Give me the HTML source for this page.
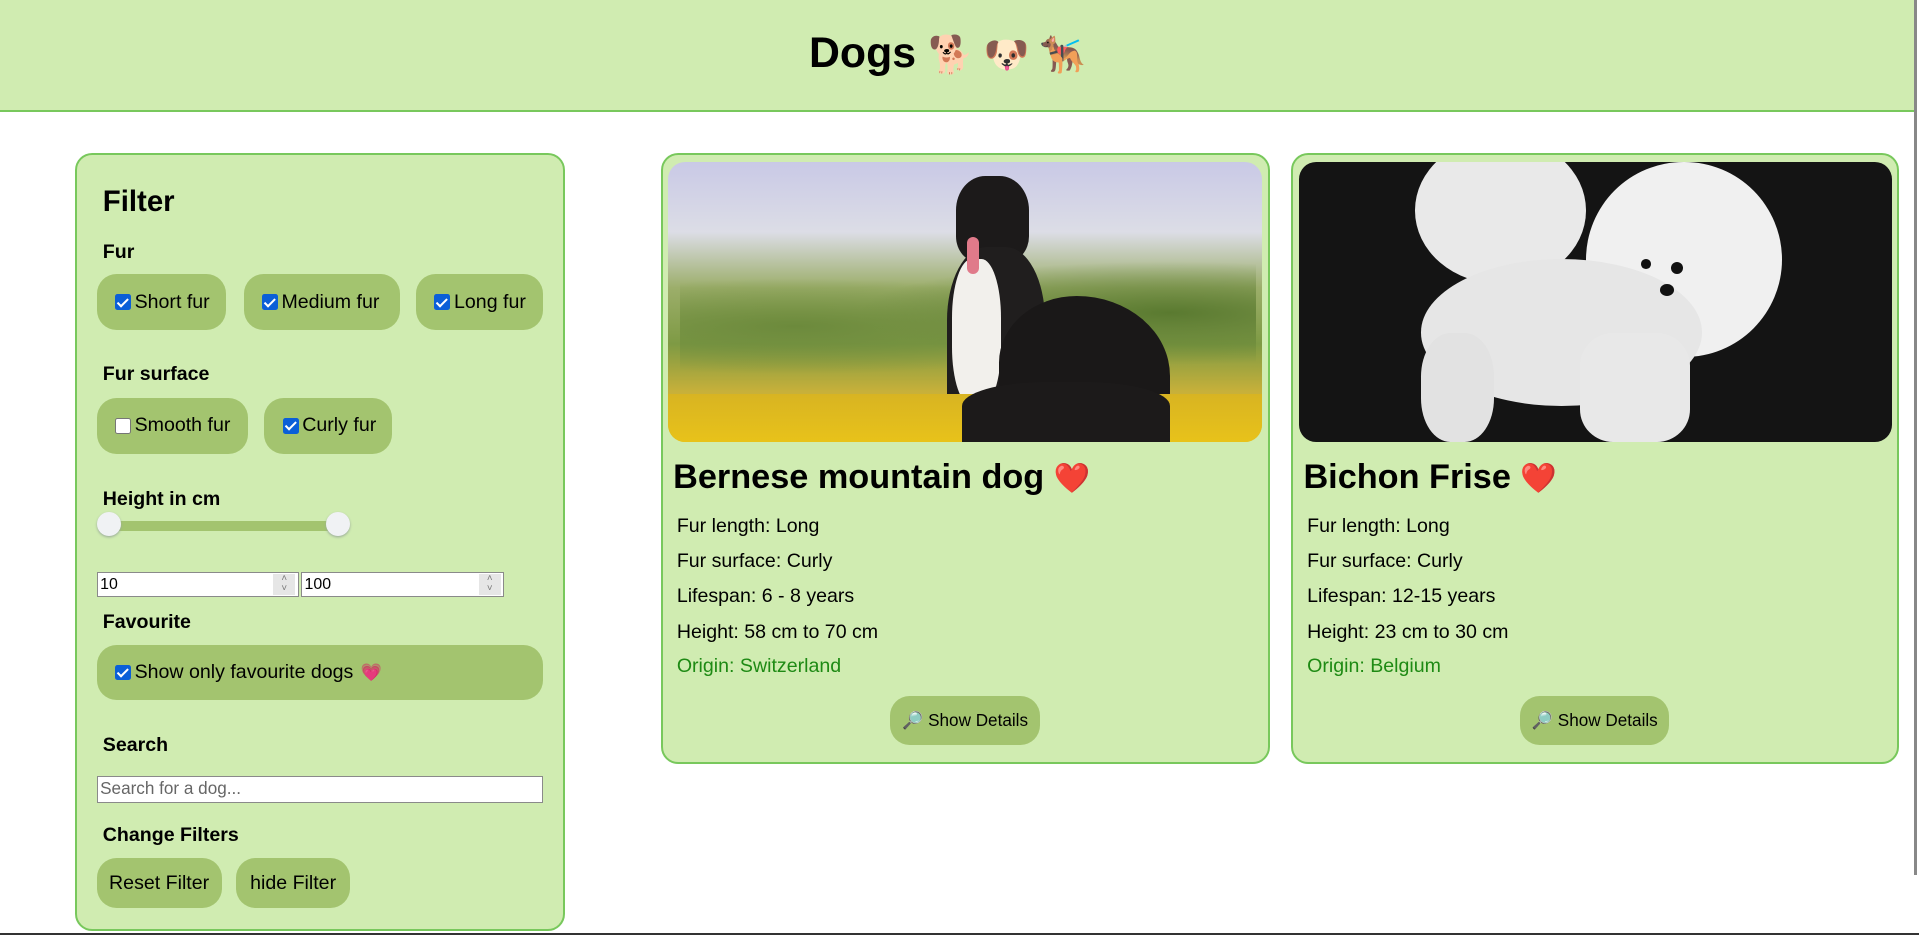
<!DOCTYPE html>
<html><head><meta charset="utf-8"><style>
html{zoom:1.2239}
body{margin:0;width:1568px;height:764px;position:relative;overflow:hidden;background:#fff;font-family:"Liberation Sans","Noto Sans CJK JP",sans-serif;color:#000}
.a{position:absolute}
.hdr{left:0;top:0;width:1564px;height:90px;background:#d0ecb1;border-bottom:2px solid #78c85c}
.panel{background:#d0ecb1;border:2px solid #78c85c;border-radius:14px;box-sizing:border-box}
.chip{background:#a3c46f;border-radius:16px;box-sizing:border-box;font-size:16px;display:flex;align-items:center;padding-left:15px}
.cb{width:13px;height:13px;border-radius:2px;background:#0a5fd8;margin-right:3px;position:relative;box-sizing:border-box}
.cb:after{content:"";position:absolute;left:4px;top:1px;width:3px;height:7px;border:solid #fff;border-width:0 2px 2px 0;transform:rotate(45deg)}
.cb.off{background:#fff;border:1px solid #767676}.cb.off:after{display:none}
.lbl{font-size:16px;font-weight:bold}
.inp{background:#fff;border:1px solid #8a8a8a;box-sizing:border-box;font-size:13px;padding-left:2px;line-height:19px}
.spin{position:absolute;right:2px;top:1px;width:18px;height:17px;background:#e6e6e6;font-size:8px;line-height:8px;text-align:center;color:#777}
.line{font-size:16px}
.btn{background:#a3c46f;border-radius:16px;font-size:14px;display:flex;align-items:center;justify-content:center}
</style></head><body>
<div class="a hdr"></div>
<div class="a" style="left:661px;top:24px;font-size:35px;font-weight:bold">Dogs <span style="font-size:30px">🐕 🐶 🐕‍🦺</span></div>
<div class="a" style="left:1564px;top:0;width:2px;height:715px;background:#888"></div>
<div class="a" style="left:0;top:762px;width:1568px;height:2px;background:#333"></div>

<div class="a panel" style="left:61px;top:125px;width:401px;height:636px"></div>
<div class="a" style="left:84px;top:151px;font-size:24px;font-weight:bold">Filter</div>
<div class="a lbl" style="left:84px;top:197px">Fur</div>
<div class="a chip" style="left:79px;top:224px;width:106px;height:46px"><span class="cb"></span>Short fur</div>
<div class="a chip" style="left:199px;top:224px;width:128px;height:46px"><span class="cb"></span>Medium fur</div>
<div class="a chip" style="left:340px;top:224px;width:104px;height:46px"><span class="cb"></span>Long fur</div>
<div class="a lbl" style="left:84px;top:297px">Fur surface</div>
<div class="a chip" style="left:79px;top:325px;width:124px;height:46px"><span class="cb off"></span>Smooth fur</div>
<div class="a chip" style="left:216px;top:325px;width:104px;height:46px"><span class="cb"></span>Curly fur</div>
<div class="a lbl" style="left:84px;top:399px">Height in cm</div>
<div class="a" style="left:88px;top:426px;width:190px;height:8px;background:#a3c46f;border-radius:4px"></div>
<div class="a" style="left:79px;top:418px;width:20px;height:20px;border-radius:50%;background:#f0f2f4;box-shadow:0 1px 2px #9a9"></div>
<div class="a" style="left:266px;top:418px;width:20px;height:20px;border-radius:50%;background:#f0f2f4;box-shadow:0 1px 2px #9a9"></div>
<div class="a inp" style="left:79px;top:467px;width:165px;height:21px">10<div class="spin">˄<br>˅</div></div>
<div class="a inp" style="left:246px;top:467px;width:166px;height:21px">100<div class="spin">˄<br>˅</div></div>
<div class="a lbl" style="left:84px;top:499px">Favourite</div>
<div class="a chip" style="left:79px;top:527px;width:365px;height:45px"><span class="cb"></span>Show only favourite dogs <span style="font-size:14px;margin-left:6px">💗</span></div>
<div class="a lbl" style="left:84px;top:600px">Search</div>
<div class="a inp" style="left:79px;top:634px;width:365px;height:22px;color:#666;font-size:14px">Search for a dog...</div>
<div class="a lbl" style="left:84px;top:673px">Change Filters</div>
<div class="a btn" style="left:79px;top:701px;width:102px;height:41px;font-size:16px">Reset Filter</div>
<div class="a btn" style="left:193px;top:701px;width:93px;height:41px;font-size:16px">hide Filter</div>

<!-- card 1 -->
<div class="a panel" style="left:540px;top:125px;width:498px;height:499px"></div>
<div class="a" style="left:546px;top:132px;width:485px;height:229px;border-radius:14px;overflow:hidden;background:linear-gradient(180deg,#c9c9e6 0%,#dcdde6 25%,#9cae6a 45%,#7e9a44 65%,#c7b03a 82%,#e2be1e 100%)">
<div class="a" style="left:10px;top:80px;width:470px;height:110px;background:radial-gradient(ellipse at 20% 50%,#6c8a3c 0%,transparent 50%),radial-gradient(ellipse at 85% 40%,#5a7a30 0%,transparent 45%)"></div>
<div class="a" style="left:235px;top:12px;width:60px;height:70px;border-radius:40% 40% 30% 30%;background:#1c1a1a"></div>
<div class="a" style="left:228px;top:70px;width:80px;height:150px;border-radius:40% 40% 10% 10%;background:#201e1e"></div>
<div class="a" style="left:232px;top:80px;width:40px;height:120px;border-radius:40%;background:#f2f0ec"></div>
<div class="a" style="left:270px;top:110px;width:140px;height:120px;border-radius:50% 60% 0 0;background:#1a1818"></div>
<div class="a" style="left:244px;top:62px;width:10px;height:30px;border-radius:5px;background:#e07a8a"></div>
<div class="a" style="left:0;top:190px;width:485px;height:39px;background:linear-gradient(180deg,#d8b422,#e8c21a)"></div>
<div class="a" style="left:240px;top:180px;width:170px;height:49px;border-radius:40% 40% 0 0;background:#1c1a1a"></div>
</div>
<div class="a" style="left:550px;top:374px;font-size:28px;font-weight:bold">Bernese mountain dog <span style="font-size:24px">❤️</span></div>
<div class="a line" style="left:553px;top:421px">Fur length: Long</div>
<div class="a line" style="left:553px;top:449px">Fur surface: Curly</div>
<div class="a line" style="left:553px;top:478px">Lifespan: 6 - 8 years</div>
<div class="a line" style="left:553px;top:507px">Height: 58 cm to 70 cm</div>
<div class="a line" style="left:553px;top:535px;color:#1e8a14">Origin: Switzerland</div>
<div class="a btn" style="left:727px;top:569px;width:123px;height:40px">🔎 Show Details</div>

<!-- card 2 -->
<div class="a panel" style="left:1055px;top:125px;width:497px;height:499px"></div>
<div class="a" style="left:1061px;top:132px;width:485px;height:229px;border-radius:14px;overflow:hidden;background:#141414">
<div class="a" style="left:95px;top:-20px;width:140px;height:120px;border-radius:50%;background:#e9e9e9"></div>
<div class="a" style="left:235px;top:0px;width:160px;height:160px;border-radius:50%;background:#f0f0f0"></div>
<div class="a" style="left:100px;top:80px;width:230px;height:120px;border-radius:50%;background:#e6e6e6"></div>
<div class="a" style="left:100px;top:140px;width:60px;height:89px;border-radius:40%;background:#e2e2e2"></div>
<div class="a" style="left:230px;top:140px;width:90px;height:89px;border-radius:30%;background:#e8e8e8"></div>
<div class="a" style="left:304px;top:82px;width:10px;height:10px;border-radius:50%;background:#111"></div>
<div class="a" style="left:280px;top:80px;width:8px;height:8px;border-radius:50%;background:#111"></div>
<div class="a" style="left:295px;top:100px;width:12px;height:10px;border-radius:50%;background:#111"></div>
</div>
<div class="a" style="left:1065px;top:374px;font-size:28px;font-weight:bold">Bichon Frise <span style="font-size:24px">❤️</span></div>
<div class="a line" style="left:1068px;top:421px">Fur length: Long</div>
<div class="a line" style="left:1068px;top:449px">Fur surface: Curly</div>
<div class="a line" style="left:1068px;top:478px">Lifespan: 12-15 years</div>
<div class="a line" style="left:1068px;top:507px">Height: 23 cm to 30 cm</div>
<div class="a line" style="left:1068px;top:535px;color:#1e8a14">Origin: Belgium</div>
<div class="a btn" style="left:1242px;top:569px;width:122px;height:40px">🔎 Show Details</div>
</body></html>
